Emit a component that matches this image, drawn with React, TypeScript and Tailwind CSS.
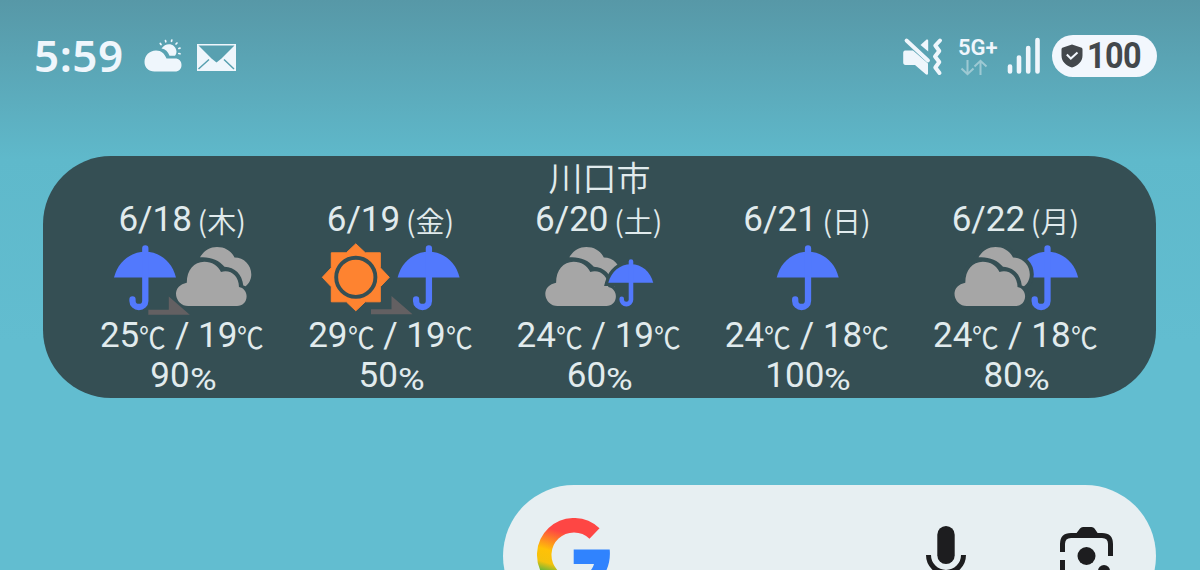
import type { ReactNode } from "react";

interface Day {
  date: string;
  weekday: string;
  high: number;
  low: number;
  rain: number;
  icon: ReactNode;
}

function Umbrella({ x, y, scale = 1, outlined = false }: { x: number; y: number; scale?: number; outlined?: boolean }) {
  const dome = "M0 32.5C4 17 16 6.8 31.2 6.8S58 17 62 32.5Z";
  return (
    <g transform={`translate(${x} ${y}) scale(${scale})`}>
      {outlined && <path d={dome} fill="#354f54" stroke="#354f54" strokeWidth="9" />}
      <path d={dome} fill="#5279fd" />
      <path
        d="M31.3 3.3V56a6.4 6 0 0 1-12.8 0v-1.5"
        fill="none"
        stroke="#5279fd"
        strokeWidth="6.3"
        strokeLinecap="round"
      />
    </g>
  );
}

function Clouds({ x, y, outlined = false }: { x: number; y: number; outlined?: boolean }) {
  const front =
    "M12.3 61A12.2 12.2 0 0 1 0 48.8C0 43.500 4 39 10.800 37.700C10.800 25 18 16.700 28.300 16.700C36 16.700 42 20.800 45 27C54 24 63 30.500 63 42C67.500 42.800 70.600 46.500 70.600 51.200C70.600 57 66.500 61 61 61Z";
  const back =
    "M24 12.3C28 5.5 34 2 41 2C49 2 55.5 6 58.5 12.5C68 12.5 75.3 20 75.3 29.5C75.3 34 73 39 69.5 41.3L67.3 40.5C66 29 59 22.5 48.5 21.8C43 15 34 11.5 24 12.3Z";
  return (
    <g transform={`translate(${x} ${y})`}>
      {outlined && <path d={`${front}${back}`} fill="#354f54" stroke="#354f54" strokeWidth="8" />}
      <path d={back} fill="#a6a6a6" />
      <path d={front} fill="#a6a6a6" />
    </g>
  );
}

function Sun({ x, y }: { x: number; y: number }) {
  return (
    <g transform={`translate(${x} ${y})`}>
      <path
        d="M0-33.5L9.5-24.5H24.5V-9.5L33.5 0L24.5 9.5V24.5H9.5L0 33.5L-9.5 24.5H-24.5V9.5L-33.5 0L-24.5-9.5V-24.5H-9.5Z"
        fill="#fe8330"
        stroke="#fe8330"
        strokeLinejoin="round"
      />
      <circle r="19.6" fill="#fe8330" stroke="#354f54" strokeWidth="3.9" />
    </g>
  );
}

function Arrow({ x, y }: { x: number; y: number }) {
  return <path d={`M${x} ${y}v-4.900h20.500v-13.300l21 18.200z`} fill="#636062" />;
}

const days: Day[] = [
  {
    date: "6/18",
    weekday: "木",
    high: 25,
    low: 19,
    rain: 90,
    icon: (
      <>
        <Arrow x={70.3} y={74.7} />
        <Umbrella x={36} y={5} />
        <Clouds x={98} y={5} />
      </>
    ),
  },
  {
    date: "6/19",
    weekday: "金",
    high: 29,
    low: 19,
    rain: 50,
    icon: (
      <>
        <Sun x={69.8} y={37.3} />
        <Arrow x={85} y={74.2} />
        <Umbrella x={111.6} y={5} />
      </>
    ),
  },
  {
    date: "6/20",
    weekday: "土",
    high: 24,
    low: 19,
    rain: 60,
    icon: (
      <>
        <Clouds x={50.3} y={5} />
        <Umbrella x={113.3} y={19.2} scale={0.725} outlined />
      </>
    ),
  },
  {
    date: "6/21",
    weekday: "日",
    high: 24,
    low: 18,
    rain: 100,
    icon: <Umbrella x={73.7} y={5} />,
  },
  {
    date: "6/22",
    weekday: "月",
    high: 24,
    low: 18,
    rain: 80,
    icon: (
      <>
        <Umbrella x={105.2} y={5} />
        <Clouds x={43.5} y={5} outlined />
      </>
    ),
  },
];

function StatusBar() {
  return (
    <header className="flex h-28 shrink-0 items-center justify-between pl-[34px] pr-[43px] text-[#eff6fc]">
      <div className="flex items-center">
        <span className="w-[110px] pb-0.5 font-['Noto_Sans'] text-[44px] font-semibold leading-[60px] tracking-[0.5px]">5:59</span>
        <svg width="38" height="34" viewBox="0 0 38 34" fill="currentColor">
          <path d="M10.500 32.500C4.500 32.500.5 28.500.5 23C.5 16.500 5.500 11.500 12 11.500C17.500 11.500 20.500 14.500 22.500 19.500H31C35 19.500 37.500 22 37.500 26S35 32.500 31 32.500Z" />
          <path d="M17.500 9.500C22 2.500 32 4.500 32.500 12.500C32.500 14 32 15.500 31 16.800H25.500C24 12.500 21.500 10.300 17.500 9.500Z" />
          <path
            d="M17 5.500l-.7-1M21.800 2.800l-.3-1.200M27.500 2.300l.3-1.200M32 5l1-1M34.800 9.500l1.200-.4M34.800 14.500l1.200.3"
            stroke="currentColor"
            strokeWidth="1.700"
            strokeLinecap="round"
          />
        </svg>
        <svg className="ml-3.5 mt-0.5" width="41" height="29" viewBox="0 0 41 29">
          <path d="M1 1H40V28H1Z" fill="currentColor" />
          <path d="M2.500 2.400H38.500L25.500 15.500L20.500 19.500L15.500 15.500Z" fill="#58a0b0" />
          <path d="M2.500 26L13 16.500M38 26L28 16.500" stroke="#58a0b0" strokeWidth="1.500" fill="none" />
        </svg>
      </div>

      <div className="flex items-center">
        <svg width="42" height="40" viewBox="0 0 42 40" fill="currentColor">
          <path d="M4 14.500H12L27 27.500V37.500C27 39 25.500 39 24.500 38L14 29H4.500C3 29 2.200 28 2.200 26.500V17C2.200 15.500 3 14.500 4 14.500Z" />
          <path d="M19.500 9L25 4C26 3.200 27.200 3.500 27.200 5V15.500Z" />
          <path d="M5.500 4.500L27 24.500" stroke="currentColor" strokeWidth="3.800" strokeLinecap="round" />
          <path
            d="M39 4.500L34.300 9.500L38.300 15L34 20.500L38.300 26L34.300 31.500L38.500 37"
            fill="none"
            stroke="currentColor"
            strokeWidth="4"
            strokeLinecap="round"
            strokeLinejoin="round"
          />
        </svg>
        <div className="ml-[15px] flex w-[42px] flex-col">
          <span className="font-['Roboto'] text-[22px] font-semibold leading-[22px]">5G+</span>
          <svg width="42" height="17" viewBox="0 0 42 17" fill="none" stroke="#9dc9d3" strokeWidth="2">
            <path d="M9.500 1V15M3.500 9.500L9.500 15.200L15.500 9.500M22.500 16V2M16.500 7.500L22.500 1.800L28.500 7.500" />
          </svg>
        </div>
        <svg className="ml-[7px]" width="34" height="38" viewBox="0 0 34 38">
          <path
            d="M3 29.500V34.500M12 20.500V34.500M21.200 11V34.500M30.500 3V34.500"
            stroke="currentColor"
            strokeWidth="4.600"
            strokeLinecap="round"
          />
        </svg>
        <div className="ml-[11px] flex h-[42px] w-[105px] items-center rounded-full bg-[#f2f7fd] pl-[9px] text-[#43484c]">
          <svg width="22" height="24" viewBox="0 0 22 24">
            <path
              d="M11 .5L20 3.500C21 3.800 21.500 4.500 21.500 5.500V11.500C21.500 17.500 17 21.500 11 23.500C5 21.500.5 17.500.5 11.500V5.500C.5 4.500 1 3.800 2 3.500Z"
              fill="currentColor"
            />
            <path d="M5.800 10.500L9.800 14.500L16.500 8.500" fill="none" stroke="#f2f7fd" strokeWidth="2" />
          </svg>
          <span className="ml-1 inline-block origin-left scale-x-[0.9] font-['Roboto'] text-[36px] font-bold leading-none tracking-[-0.6px]">
            100
          </span>
        </div>
      </div>
    </header>
  );
}

function Degree() {
  return (
    <span className="relative top-0.5 -mr-0.5 inline-block origin-left scale-x-[0.92] font-['Noto_Sans_CJK_JP'] text-[29px] leading-none">
      ℃
    </span>
  );
}

function Forecast({ day }: { day: Day }) {
  return (
    <li className="flex w-[208.300px] flex-col items-center whitespace-nowrap">
      <p className="h-[42px] leading-[40px]">
        {day.date}{" "}
        <span className="relative top-0.5 -ml-[3px] font-['Noto_Sans_CJK_JP'] text-[29px] font-[350]">({day.weekday})</span>
      </p>
      <svg className="overflow-visible" width="208" height="74" viewBox="0 0 208 74">
        {day.icon}
      </svg>
      <p className="h-[41px] leading-[43px]">
        {day.high}
        <Degree /> / {day.low}
        <Degree />
      </p>
      <p className="h-[41px] pr-px leading-[42px]">
        {day.rain}
        <span className="relative top-[3px] inline-block origin-left scale-x-[1.14] text-[32px] leading-none">%</span>
      </p>
    </li>
  );
}

function SearchBar() {
  return (
    <div className="ml-auto mr-11 mt-[87px] flex h-[142px] w-[653px] shrink-0 items-center rounded-full bg-[#e7eff2] pl-[33px] pr-[42px]">
      <svg width="76" height="76" viewBox="0 0 76 76" fill="none">
        <defs>
          <linearGradient id="ring" gradientUnits="userSpaceOnUse" x1="26" y1="8" x2="10" y2="62">
            <stop offset="0.1" stopColor="#fe4644" />
            <stop offset="0.48" stopColor="#ffc107" />
            <stop offset="0.7" stopColor="#f4c20d" />
            <stop offset="0.92" stopColor="#34b24c" />
          </linearGradient>
        </defs>
        <path d="M58.500 15.500A29.700 29.700 0 1 0 56 60.500" stroke="url(#ring)" strokeWidth="14.500" />
        <path d="M37.700 31.500H73.700C75 45 70 57 61 65L50 57C54 54 57 50 58 46H37.700Z" fill="#3083fe" />
      </svg>
      <svg className="ml-auto" width="42" height="62" viewBox="0 0 42 62">
        <rect x="12.300" y="1" width="17.400" height="38" rx="8.700" fill="#1d1d1f" />
        <path d="M3.500 30a17.500 17.500 0 0 0 35 0M21 47V60" fill="none" stroke="#1d1d1f" strokeWidth="5" />
      </svg>
      <svg className="ml-[91px]" width="56" height="60" viewBox="0 0 56 60">
        <path
          d="M4.500 26V18Q4.500 9.500 13 9.500H44Q52.500 9.500 52.500 18V30M4.500 34V45Q4.500 54 13 54H28"
          fill="none"
          stroke="#1d1d1f"
          strokeWidth="5"
        />
        <path d="M17 9L22 2.500Q23 1 25 1H33.500Q35.500 1 36.500 2.500L41 9Z" fill="#1d1d1f" />
        <circle cx="28.500" cy="30" r="9" fill="#1d1d1f" />
        <circle cx="46" cy="45" r="6" fill="#1d1d1f" />
      </svg>
    </div>
  );
}

export default function App() {
  return (
    <main className="flex h-[570px] w-[1200px] flex-col overflow-hidden bg-[#62bdd0] bg-linear-to-b from-[#5798a7] from-0% via-[#5fb9cb] via-28% to-[#62bdd0] to-60%">
      <StatusBar />
      <section className="ml-[43px] mt-11 h-[242px] w-[1113px] shrink-0 rounded-[68px] bg-[#354f54] font-['Roboto','Noto_Sans_CJK_JP',sans-serif] text-[35px] text-[#e1ebed]">
        <h1 className="h-[42px] text-center font-['Noto_Sans_CJK_JP'] text-[34px] font-[350] leading-[42px]">川口市</h1>
        <ul className="ml-[35px] flex">
          {days.map((day) => (
            <Forecast key={day.date} day={day} />
          ))}
        </ul>
      </section>
      <SearchBar />
    </main>
  );
}
